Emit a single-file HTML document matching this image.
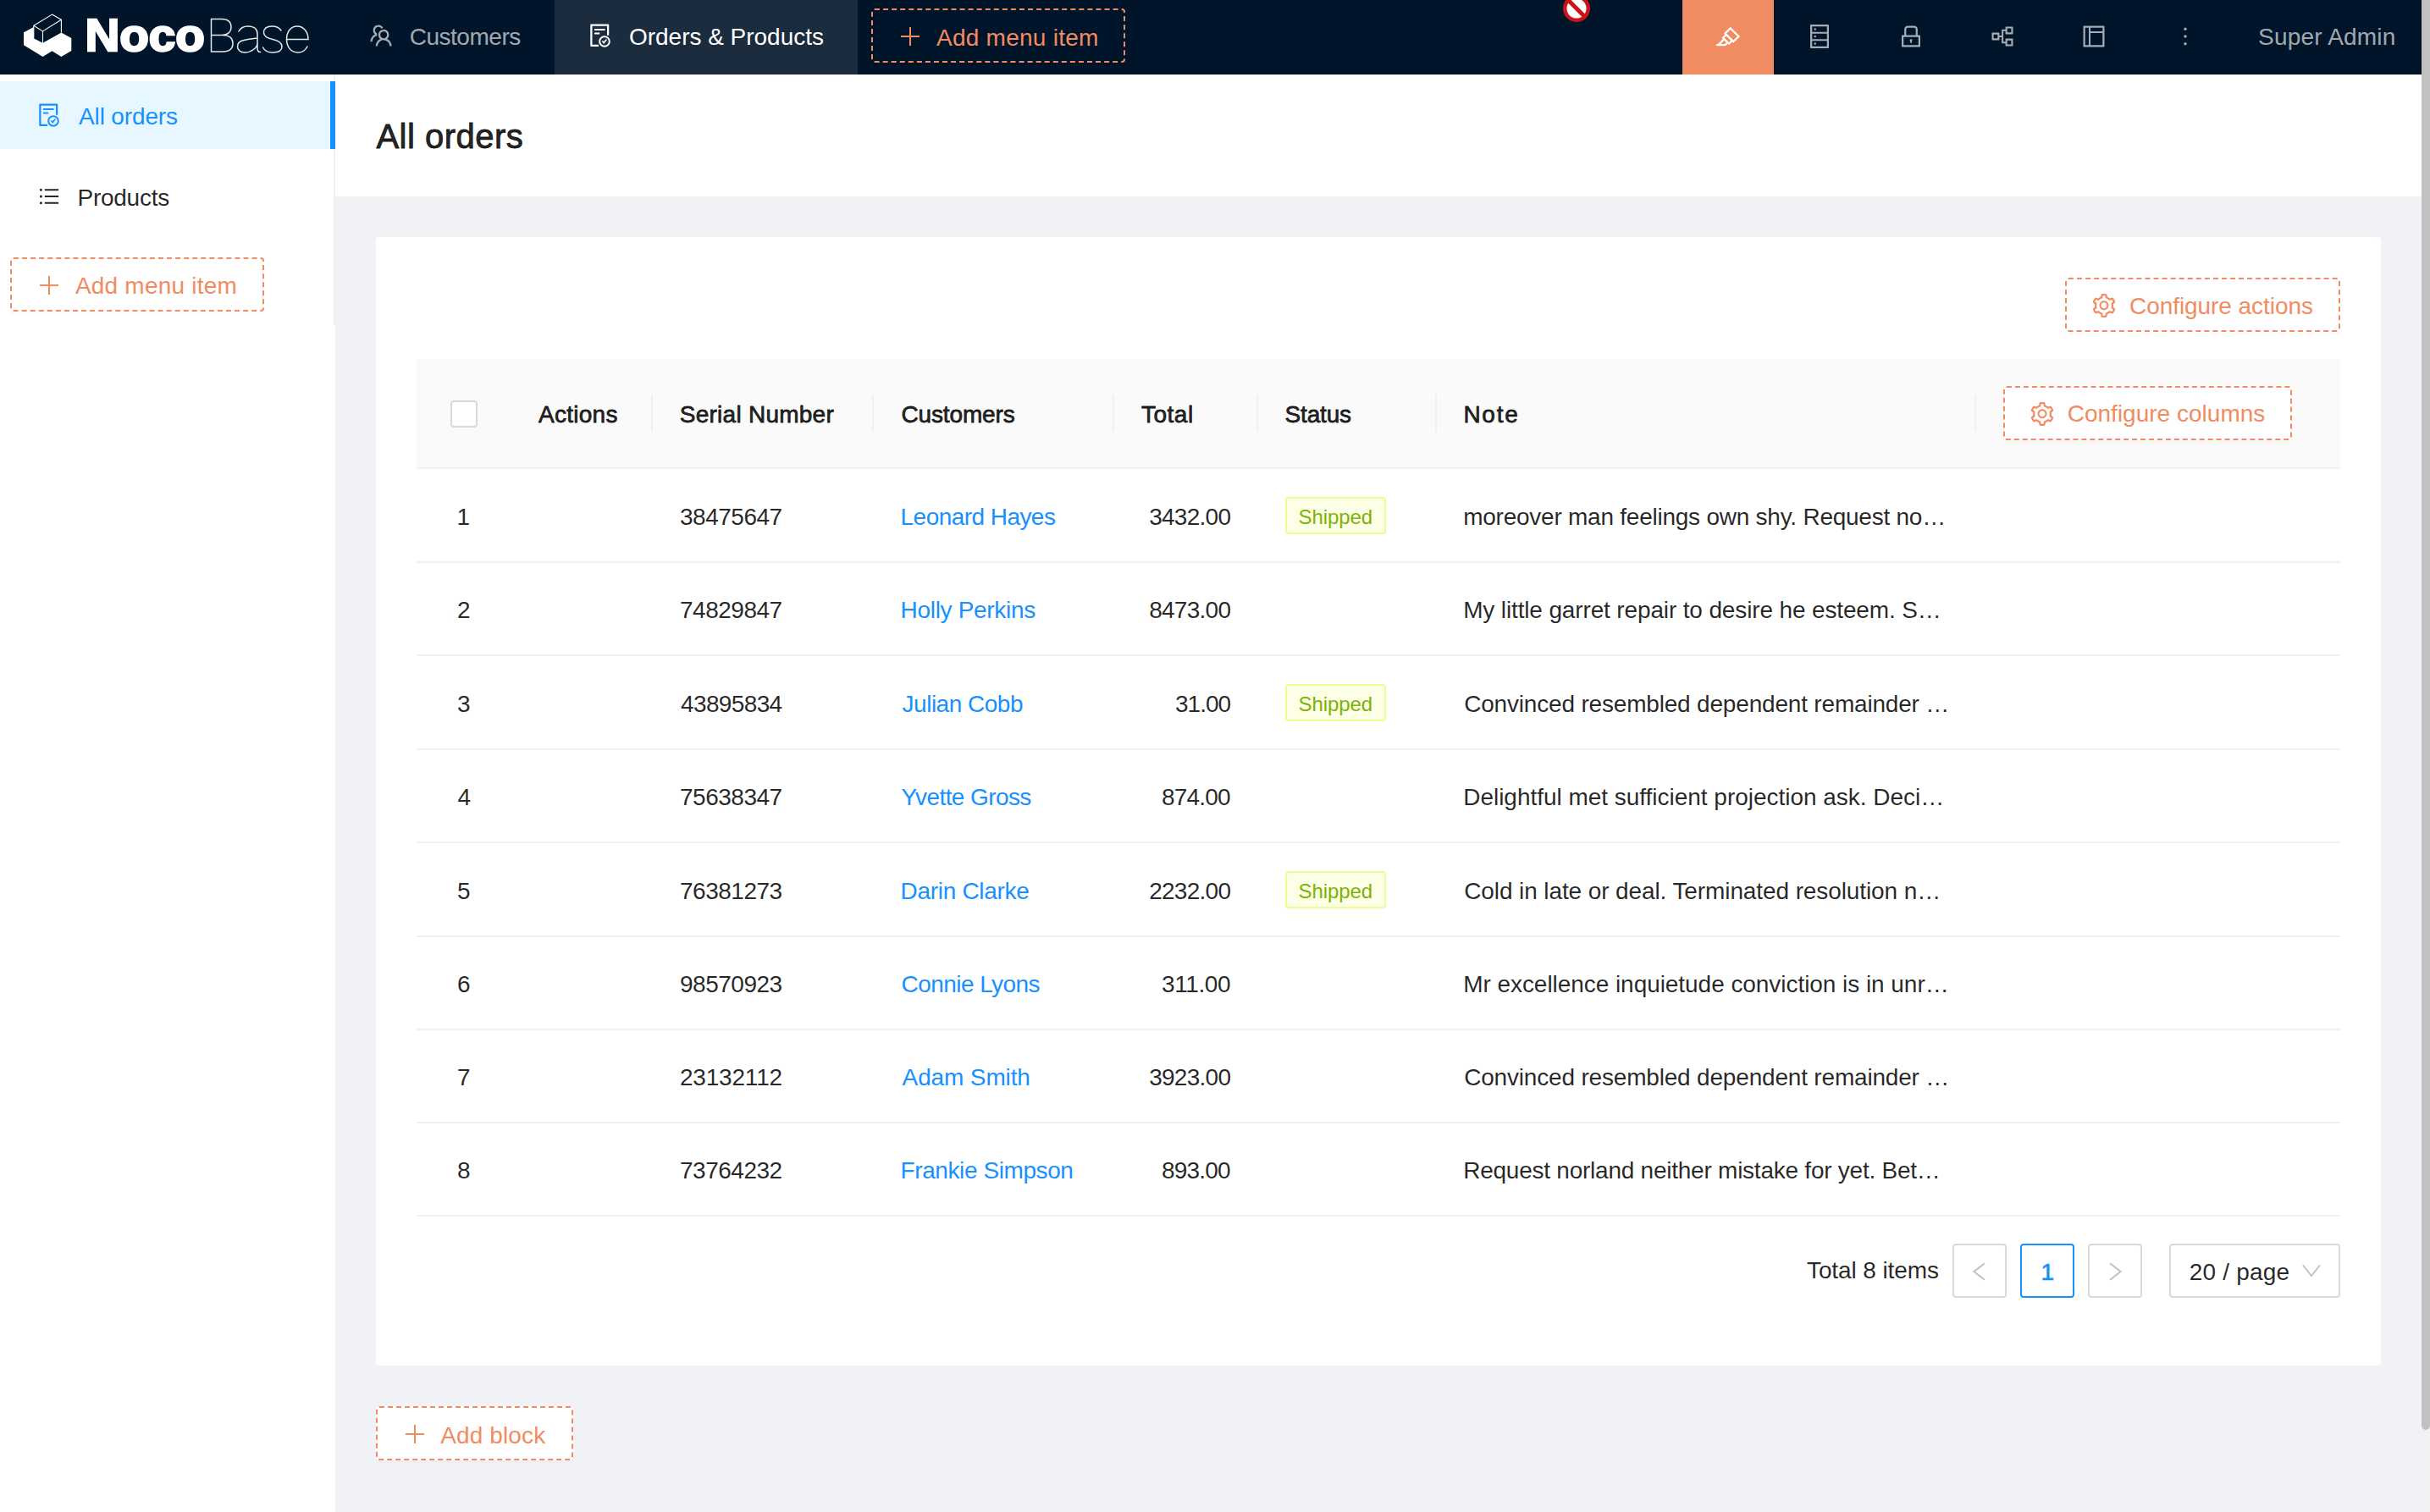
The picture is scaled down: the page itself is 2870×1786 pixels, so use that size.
<!DOCTYPE html>
<html><head><meta charset="utf-8"><title>NocoBase</title>
<style>
html,body{margin:0;padding:0;}
body{width:2870px;height:1786px;overflow:hidden;position:relative;background:#f0f2f5;font-family:"Liberation Sans",sans-serif;}
.a{position:absolute;box-sizing:border-box;}
.t{white-space:nowrap;}
@media (max-width:1600px){body{zoom:0.5;}}
</style></head><body>
<div class="a" style="left:0px;top:88px;width:396px;height:1698px;background:#fff"></div>
<div class="a" style="left:394px;top:88px;width:2px;height:296px;background:#f0f0f0"></div>
<div class="a" style="left:0px;top:96px;width:390px;height:80px;background:#e6f7ff"></div>
<div class="a" style="left:390px;top:96px;width:6px;height:80px;background:#1890ff"></div>
<svg class="a" style="left:42px;top:120px;" width="32" height="32" viewBox="0 0 1024 1024"><path fill="#1890ff" d="M688 312v-48c0-4.4-3.6-8-8-8H296c-4.4 0-8 3.6-8 8v48c0 4.4 3.6 8 8 8h384c4.4 0 8-3.6 8-8zm-392 88c-4.4 0-8 3.6-8 8v48c0 4.4 3.6 8 8 8h184c4.4 0 8-3.6 8-8v-48c0-4.4-3.6-8-8-8H296zm376 116c-119.3 0-216 96.7-216 216s96.7 216 216 216 216-96.7 216-216-96.7-216-216-216zm107.5 323.5C750.8 868.2 712.6 884 672 884s-78.8-15.8-107.5-44.5C535.8 810.8 520 772.6 520 732s15.8-78.8 44.5-107.5C593.2 595.8 631.4 580 672 580s78.8 15.8 107.5 44.5C808.2 653.2 824 691.4 824 732s-15.8 78.8-44.5 107.5zM761 656h-44.3c-2.6 0-5 1.2-6.5 3.3l-63.5 87.8-23.1-31.9a7.920 7.920 0 00-6.5-3.3H573c-6.5 0-10.3 7.4-6.5 12.7l73.8 102.1c3.2 4.4 9.7 4.4 12.9 0l114.2-158c3.9-5.3.1-12.7-6.4-12.7zM440 852H208V148h560v344c0 4.4 3.6 8 8 8h56c4.4 0 8-3.6 8-8V108c0-17.7-14.3-32-32-32H168c-17.7 0-32 14.3-32 32v784c0 17.7 14.3 32 32 32h272c4.4 0 8-3.6 8-8v-56c0-4.4-3.6-8-8-8z"/></svg>
<div class="a t" style="left:93.00px;top:124.00px;font-size:28px;line-height:28px;color:#1890ff;letter-spacing:-0.133px;font-weight:400;">All orders</div>
<svg class="a" style="left:44px;top:218px;" width="28" height="28" viewBox="0 0 1024 1024"><path fill="rgba(0,0,0,0.85)" d="M912 192H328c-4.4 0-8 3.6-8 8v56c0 4.4 3.6 8 8 8h584c4.4 0 8-3.6 8-8v-56c0-4.4-3.6-8-8-8zm0 284H328c-4.4 0-8 3.6-8 8v56c0 4.4 3.6 8 8 8h584c4.4 0 8-3.6 8-8v-56c0-4.4-3.6-8-8-8zm0 284H328c-4.4 0-8 3.6-8 8v56c0 4.4 3.6 8 8 8h584c4.4 0 8-3.6 8-8v-56c0-4.4-3.6-8-8-8zM104 228a56 56 0 10112 0 56 56 0 10-112 0zm0 284a56 56 0 10112 0 56 56 0 10-112 0zm0 284a56 56 0 10112 0 56 56 0 10-112 0z"/></svg>
<div class="a t" style="left:91.50px;top:220.00px;font-size:28px;line-height:28px;color:rgba(0,0,0,0.85);letter-spacing:-0.257px;font-weight:400;">Products</div>
<div class="a" style="left:12px;top:304px;width:300px;height:64px;border:2px dashed #f18b62;border-radius:4px;background:#fff;box-shadow:0 4px 0 rgba(0,0,0,0.015)"></div>
<svg class="a" style="left:47.0px;top:326.0px;" width="22" height="22" viewBox="0 0 22 22"><path d="M11.0 0V22M0 11.0H22" stroke="#f18b62" stroke-width="2" fill="none"/></svg>
<div class="a t" style="left:88.90px;top:323.70px;font-size:28px;line-height:28px;color:#f18b62;letter-spacing:0.217px;font-weight:400;">Add menu item</div>
<div class="a" style="left:396px;top:88px;width:2464px;height:144px;background:#fff"></div>
<div class="a t" style="left:444.40px;top:141.00px;font-size:40px;line-height:40px;color:rgba(0,0,0,0.85);letter-spacing:0.489px;font-weight:400;-webkit-text-stroke:0.9px rgba(0,0,0,0.85);">All orders</div>
<div class="a" style="left:444px;top:280px;width:2368px;height:1333px;background:#fff;border-radius:4px"></div>
<div class="a" style="left:2439px;top:328px;width:325px;height:64px;border:2px dashed #f18b62;border-radius:4px;background:#fff;box-shadow:0 4px 0 rgba(0,0,0,0.015)"></div>
<svg class="a" style="left:2469px;top:344.7px;" width="32" height="32" viewBox="0 0 1024 1024"><path fill="#f18b62" d="M924.8 625.7l-65.5-56c3.1-19 4.7-38.4 4.7-57.8s-1.6-38.8-4.7-57.8l65.5-56a32.03 32.03 0 009.3-35.2l-.9-2.6a443.74 443.74 0 00-79.7-137.9l-1.8-2.1a32.12 32.12 0 00-35.1-9.5l-81.3 28.9c-30-24.6-63.5-44-99.7-57.6l-15.7-85a32.05 32.05 0 00-25.8-25.7l-2.7-.5c-52.1-9.4-106.9-9.4-159 0l-2.7.5a32.05 32.05 0 00-25.8 25.7l-15.8 85.4a351.86 351.86 0 00-99 57.4l-81.9-29.1a32 32 0 00-35.1 9.5l-1.8 2.1a446.02 446.02 0 00-79.7 137.9l-.9 2.6c-4.5 12.5-.8 26.5 9.3 35.2l66.3 56.6c-3.1 18.8-4.6 38-4.6 57.1 0 19.2 1.5 38.4 4.6 57.1L99 625.5a32.03 32.03 0 00-9.3 35.2l.9 2.6c18.1 50.4 44.9 96.9 79.7 137.9l1.8 2.1a32.12 32.12 0 0035.1 9.5l81.9-29.1c29.8 24.5 63.1 43.9 99 57.4l15.8 85.4a32.05 32.05 0 0025.8 25.7l2.7.5a449.4 449.4 0 00159 0l2.7-.5a32.05 32.05 0 0025.8-25.7l15.7-85a350 350 0 0099.7-57.6l81.3 28.9a32 32 0 0035.1-9.5l1.8-2.1c34.8-41.1 61.6-87.5 79.7-137.9l.9-2.6c4.5-12.3.8-26.3-9.3-35zM788.3 465.9c2.5 15.1 3.8 30.6 3.8 46.1s-1.3 31-3.8 46.1l-6.6 40.1 74.7 63.9a370.03 370.03 0 01-42.6 73.6L721 702.8l-31.4 25.8c-23.9 19.6-50.5 35-79.3 45.8l-38.1 14.3-17.9 97a377.5 377.5 0 01-85 0l-17.9-97.2-37.8-14.5c-28.5-10.8-55-26.2-78.7-45.7l-31.4-25.9-93.4 33.2c-17-22.9-31.2-47.6-42.6-73.6l75.5-64.5-6.5-40c-2.4-14.9-3.7-30.3-3.7-45.5 0-15.3 1.2-30.6 3.7-45.5l6.5-40-75.5-64.5c11.3-26.1 25.6-50.7 42.6-73.6l93.4 33.2 31.4-25.9c23.7-19.5 50.2-34.9 78.7-45.7l37.9-14.3 17.9-97.2c28.1-3.2 56.8-3.2 85 0l17.9 97 38.1 14.3c28.7 10.8 55.4 26.2 79.3 45.8l31.4 25.8 92.8-32.9c17 22.9 31.2 47.6 42.6 73.6L781.8 426l6.5 39.9zM512 326c-97.2 0-176 78.8-176 176s78.8 176 176 176 176-78.8 176-176-78.8-176-176-176zm79.2 255.2A111.6 111.6 0 01512 614c-29.9 0-58-11.7-79.2-32.8A111.6 111.6 0 01400 502c0-29.9 11.7-58 32.8-79.2C454 401.6 482.1 390 512 390c29.9 0 58 11.6 79.2 32.8A111.6 111.6 0 01624 502c0 29.9-11.7 58-32.8 79.2z"/></svg>
<div class="a t" style="left:2515.00px;top:347.50px;font-size:28px;line-height:28px;color:#f18b62;letter-spacing:-0.062px;font-weight:400;">Configure actions</div>
<div class="a" style="left:492px;top:424px;width:2272px;height:128px;background:#fafafa;border-radius:4px 4px 0 0"></div>
<div class="a" style="left:492px;top:552px;width:2272px;height:2px;background:#f0f0f0"></div>
<div class="a" style="left:769px;top:466px;width:2px;height:44px;background:#f0f0f0"></div>
<div class="a" style="left:1030px;top:466px;width:2px;height:44px;background:#f0f0f0"></div>
<div class="a" style="left:1314px;top:466px;width:2px;height:44px;background:#f0f0f0"></div>
<div class="a" style="left:1484px;top:466px;width:2px;height:44px;background:#f0f0f0"></div>
<div class="a" style="left:1695px;top:466px;width:2px;height:44px;background:#f0f0f0"></div>
<div class="a" style="left:2332px;top:466px;width:2px;height:44px;background:#f0f0f0"></div>
<div class="a" style="left:532px;top:473px;width:32px;height:32px;border:2px solid #d9d9d9;border-radius:4px;background:#fff"></div>
<div class="a t" style="left:636.00px;top:475.50px;font-size:28px;line-height:28px;color:rgba(0,0,0,0.85);letter-spacing:0.267px;font-weight:400;-webkit-text-stroke:0.8px rgba(0,0,0,0.85);">Actions</div>
<div class="a t" style="left:802.80px;top:475.50px;font-size:28px;line-height:28px;color:rgba(0,0,0,0.85);letter-spacing:0.250px;font-weight:400;-webkit-text-stroke:0.8px rgba(0,0,0,0.85);">Serial Number</div>
<div class="a t" style="left:1064.40px;top:475.50px;font-size:28px;line-height:28px;color:rgba(0,0,0,0.85);letter-spacing:-0.125px;font-weight:400;-webkit-text-stroke:0.8px rgba(0,0,0,0.85);">Customers</div>
<div class="a t" style="left:1348.00px;top:475.50px;font-size:28px;line-height:28px;color:rgba(0,0,0,0.85);letter-spacing:0.500px;font-weight:400;-webkit-text-stroke:0.8px rgba(0,0,0,0.85);">Total</div>
<div class="a t" style="left:1517.50px;top:475.50px;font-size:28px;line-height:28px;color:rgba(0,0,0,0.85);letter-spacing:-0.160px;font-weight:400;-webkit-text-stroke:0.8px rgba(0,0,0,0.85);">Status</div>
<div class="a t" style="left:1728.40px;top:475.50px;font-size:28px;line-height:28px;color:rgba(0,0,0,0.85);letter-spacing:1.733px;font-weight:400;-webkit-text-stroke:0.8px rgba(0,0,0,0.85);">Note</div>
<div class="a" style="left:2366px;top:456px;width:341px;height:64px;border:2px dashed #f18b62;border-radius:4px;background:#fff;box-shadow:0 4px 0 rgba(0,0,0,0.015)"></div>
<svg class="a" style="left:2395.6px;top:472.9px;" width="32" height="32" viewBox="0 0 1024 1024"><path fill="#f18b62" d="M924.8 625.7l-65.5-56c3.1-19 4.7-38.4 4.7-57.8s-1.6-38.8-4.7-57.8l65.5-56a32.03 32.03 0 009.3-35.2l-.9-2.6a443.74 443.74 0 00-79.7-137.9l-1.8-2.1a32.12 32.12 0 00-35.1-9.5l-81.3 28.9c-30-24.6-63.5-44-99.7-57.6l-15.7-85a32.05 32.05 0 00-25.8-25.7l-2.7-.5c-52.1-9.4-106.9-9.4-159 0l-2.7.5a32.05 32.05 0 00-25.8 25.7l-15.8 85.4a351.86 351.86 0 00-99 57.4l-81.9-29.1a32 32 0 00-35.1 9.5l-1.8 2.1a446.02 446.02 0 00-79.7 137.9l-.9 2.6c-4.5 12.5-.8 26.5 9.3 35.2l66.3 56.6c-3.1 18.8-4.6 38-4.6 57.1 0 19.2 1.5 38.4 4.6 57.1L99 625.5a32.03 32.03 0 00-9.3 35.2l.9 2.6c18.1 50.4 44.9 96.9 79.7 137.9l1.8 2.1a32.12 32.12 0 0035.1 9.5l81.9-29.1c29.8 24.5 63.1 43.9 99 57.4l15.8 85.4a32.05 32.05 0 0025.8 25.7l2.7.5a449.4 449.4 0 00159 0l2.7-.5a32.05 32.05 0 0025.8-25.7l15.7-85a350 350 0 0099.7-57.6l81.3 28.9a32 32 0 0035.1-9.5l1.8-2.1c34.8-41.1 61.6-87.5 79.7-137.9l.9-2.6c4.5-12.3.8-26.3-9.3-35zM788.3 465.9c2.5 15.1 3.8 30.6 3.8 46.1s-1.3 31-3.8 46.1l-6.6 40.1 74.7 63.9a370.03 370.03 0 01-42.6 73.6L721 702.8l-31.4 25.8c-23.9 19.6-50.5 35-79.3 45.8l-38.1 14.3-17.9 97a377.5 377.5 0 01-85 0l-17.9-97.2-37.8-14.5c-28.5-10.8-55-26.2-78.7-45.7l-31.4-25.9-93.4 33.2c-17-22.9-31.2-47.6-42.6-73.6l75.5-64.5-6.5-40c-2.4-14.9-3.7-30.3-3.7-45.5 0-15.3 1.2-30.6 3.7-45.5l6.5-40-75.5-64.5c11.3-26.1 25.6-50.7 42.6-73.6l93.4 33.2 31.4-25.9c23.7-19.5 50.2-34.9 78.7-45.7l37.9-14.3 17.9-97.2c28.1-3.2 56.8-3.2 85 0l17.9 97 38.1 14.3c28.7 10.8 55.4 26.2 79.3 45.8l31.4 25.8 92.8-32.9c17 22.9 31.2 47.6 42.6 73.6L781.8 426l6.5 39.9zM512 326c-97.2 0-176 78.8-176 176s78.8 176 176 176 176-78.8 176-176-78.8-176-176-176zm79.2 255.2A111.6 111.6 0 01512 614c-29.9 0-58-11.7-79.2-32.8A111.6 111.6 0 01400 502c0-29.9 11.7-58 32.8-79.2C454 401.6 482.1 390 512 390c29.9 0 58 11.6 79.2 32.8A111.6 111.6 0 01624 502c0 29.9-11.7 58-32.8 79.2z"/></svg>
<div class="a t" style="left:2441.70px;top:475.00px;font-size:28px;line-height:28px;color:#f18b62;letter-spacing:0.012px;font-weight:400;">Configure columns</div>
<div class="a t" style="left:539.50px;top:596.50px;font-size:28px;line-height:28px;color:rgba(0,0,0,0.85);letter-spacing:0.000px;font-weight:400;">1</div>
<div class="a t" style="left:803.00px;top:596.50px;font-size:28px;line-height:28px;color:rgba(0,0,0,0.85);letter-spacing:-0.486px;font-weight:400;">38475647</div>
<div class="a t" style="left:1063.60px;top:596.50px;font-size:28px;line-height:28px;color:#1890ff;letter-spacing:-0.550px;font-weight:400;">Leonard Hayes</div>
<div class="a t" style="left:1357.20px;top:596.50px;font-size:28px;line-height:28px;color:rgba(0,0,0,0.85);letter-spacing:-0.733px;font-weight:400;">3432.00</div>
<div class="a" style="left:1518px;top:587px;width:119px;height:44px;background:#fcffe6;border:2px solid #eaff8f;border-radius:4px"></div>
<div class="a t" style="left:1533.50px;top:599.00px;font-size:24px;line-height:24px;color:#7cb305;letter-spacing:-0.067px;font-weight:400;">Shipped</div>
<div class="a t" style="left:1728.20px;top:596.50px;font-size:28px;line-height:28px;color:rgba(0,0,0,0.85);letter-spacing:-0.244px;font-weight:400;">moreover man feelings own shy. Request no…</div>
<div class="a" style="left:492px;top:663px;width:2272px;height:2px;background:#f0f0f0"></div>
<div class="a t" style="left:540.00px;top:707.00px;font-size:28px;line-height:28px;color:rgba(0,0,0,0.85);letter-spacing:0.000px;font-weight:400;">2</div>
<div class="a t" style="left:803.00px;top:707.00px;font-size:28px;line-height:28px;color:rgba(0,0,0,0.85);letter-spacing:-0.486px;font-weight:400;">74829847</div>
<div class="a t" style="left:1063.60px;top:707.00px;font-size:28px;line-height:28px;color:#1890ff;letter-spacing:-0.317px;font-weight:400;">Holly Perkins</div>
<div class="a t" style="left:1357.20px;top:707.00px;font-size:28px;line-height:28px;color:rgba(0,0,0,0.85);letter-spacing:-0.733px;font-weight:400;">8473.00</div>
<div class="a t" style="left:1728.20px;top:707.00px;font-size:28px;line-height:28px;color:rgba(0,0,0,0.85);letter-spacing:-0.143px;font-weight:400;">My little garret repair to desire he esteem. S…</div>
<div class="a" style="left:492px;top:773px;width:2272px;height:2px;background:#f0f0f0"></div>
<div class="a t" style="left:540.00px;top:817.50px;font-size:28px;line-height:28px;color:rgba(0,0,0,0.85);letter-spacing:0.000px;font-weight:400;">3</div>
<div class="a t" style="left:804.00px;top:817.50px;font-size:28px;line-height:28px;color:rgba(0,0,0,0.85);letter-spacing:-0.629px;font-weight:400;">43895834</div>
<div class="a t" style="left:1065.60px;top:817.50px;font-size:28px;line-height:28px;color:#1890ff;letter-spacing:-0.500px;font-weight:400;">Julian Cobb</div>
<div class="a t" style="left:1388.00px;top:817.50px;font-size:28px;line-height:28px;color:rgba(0,0,0,0.85);letter-spacing:-1.000px;font-weight:400;">31.00</div>
<div class="a" style="left:1518px;top:808px;width:119px;height:44px;background:#fcffe6;border:2px solid #eaff8f;border-radius:4px"></div>
<div class="a t" style="left:1533.50px;top:820.00px;font-size:24px;line-height:24px;color:#7cb305;letter-spacing:-0.067px;font-weight:400;">Shipped</div>
<div class="a t" style="left:1729.20px;top:817.50px;font-size:28px;line-height:28px;color:rgba(0,0,0,0.85);letter-spacing:-0.185px;font-weight:400;">Convinced resembled dependent remainder …</div>
<div class="a" style="left:492px;top:884px;width:2272px;height:2px;background:#f0f0f0"></div>
<div class="a t" style="left:540.50px;top:928.00px;font-size:28px;line-height:28px;color:rgba(0,0,0,0.85);letter-spacing:0.000px;font-weight:400;">4</div>
<div class="a t" style="left:803.00px;top:928.00px;font-size:28px;line-height:28px;color:rgba(0,0,0,0.85);letter-spacing:-0.486px;font-weight:400;">75638347</div>
<div class="a t" style="left:1064.60px;top:928.00px;font-size:28px;line-height:28px;color:#1890ff;letter-spacing:-0.600px;font-weight:400;">Yvette Gross</div>
<div class="a t" style="left:1372.00px;top:928.00px;font-size:28px;line-height:28px;color:rgba(0,0,0,0.85);letter-spacing:-0.800px;font-weight:400;">874.00</div>
<div class="a t" style="left:1728.20px;top:928.00px;font-size:28px;line-height:28px;color:rgba(0,0,0,0.85);letter-spacing:-0.022px;font-weight:400;">Delightful met sufficient projection ask. Deci…</div>
<div class="a" style="left:492px;top:994px;width:2272px;height:2px;background:#f0f0f0"></div>
<div class="a t" style="left:540.00px;top:1038.50px;font-size:28px;line-height:28px;color:rgba(0,0,0,0.85);letter-spacing:0.000px;font-weight:400;">5</div>
<div class="a t" style="left:803.00px;top:1038.50px;font-size:28px;line-height:28px;color:rgba(0,0,0,0.85);letter-spacing:-0.486px;font-weight:400;">76381273</div>
<div class="a t" style="left:1063.60px;top:1038.50px;font-size:28px;line-height:28px;color:#1890ff;letter-spacing:-0.309px;font-weight:400;">Darin Clarke</div>
<div class="a t" style="left:1357.20px;top:1038.50px;font-size:28px;line-height:28px;color:rgba(0,0,0,0.85);letter-spacing:-0.733px;font-weight:400;">2232.00</div>
<div class="a" style="left:1518px;top:1029px;width:119px;height:44px;background:#fcffe6;border:2px solid #eaff8f;border-radius:4px"></div>
<div class="a t" style="left:1533.50px;top:1041.00px;font-size:24px;line-height:24px;color:#7cb305;letter-spacing:-0.067px;font-weight:400;">Shipped</div>
<div class="a t" style="left:1729.20px;top:1038.50px;font-size:28px;line-height:28px;color:rgba(0,0,0,0.85);letter-spacing:-0.102px;font-weight:400;">Cold in late or deal. Terminated resolution n…</div>
<div class="a" style="left:492px;top:1105px;width:2272px;height:2px;background:#f0f0f0"></div>
<div class="a t" style="left:540.00px;top:1149.00px;font-size:28px;line-height:28px;color:rgba(0,0,0,0.85);letter-spacing:0.000px;font-weight:400;">6</div>
<div class="a t" style="left:803.00px;top:1149.00px;font-size:28px;line-height:28px;color:rgba(0,0,0,0.85);letter-spacing:-0.486px;font-weight:400;">98570923</div>
<div class="a t" style="left:1064.60px;top:1149.00px;font-size:28px;line-height:28px;color:#1890ff;letter-spacing:-0.564px;font-weight:400;">Connie Lyons</div>
<div class="a t" style="left:1372.00px;top:1149.00px;font-size:28px;line-height:28px;color:rgba(0,0,0,0.85);letter-spacing:-0.400px;font-weight:400;">311.00</div>
<div class="a t" style="left:1728.20px;top:1149.00px;font-size:28px;line-height:28px;color:rgba(0,0,0,0.85);letter-spacing:-0.053px;font-weight:400;">Mr excellence inquietude conviction is in unr…</div>
<div class="a" style="left:492px;top:1215px;width:2272px;height:2px;background:#f0f0f0"></div>
<div class="a t" style="left:540.00px;top:1259.00px;font-size:28px;line-height:28px;color:rgba(0,0,0,0.85);letter-spacing:0.000px;font-weight:400;">7</div>
<div class="a t" style="left:803.00px;top:1259.00px;font-size:28px;line-height:28px;color:rgba(0,0,0,0.85);letter-spacing:-0.200px;font-weight:400;">23132112</div>
<div class="a t" style="left:1065.60px;top:1259.00px;font-size:28px;line-height:28px;color:#1890ff;letter-spacing:-0.133px;font-weight:400;">Adam Smith</div>
<div class="a t" style="left:1357.20px;top:1259.00px;font-size:28px;line-height:28px;color:rgba(0,0,0,0.85);letter-spacing:-0.733px;font-weight:400;">3923.00</div>
<div class="a t" style="left:1729.20px;top:1259.00px;font-size:28px;line-height:28px;color:rgba(0,0,0,0.85);letter-spacing:-0.185px;font-weight:400;">Convinced resembled dependent remainder …</div>
<div class="a" style="left:492px;top:1325px;width:2272px;height:2px;background:#f0f0f0"></div>
<div class="a t" style="left:540.00px;top:1369.00px;font-size:28px;line-height:28px;color:rgba(0,0,0,0.85);letter-spacing:0.000px;font-weight:400;">8</div>
<div class="a t" style="left:803.00px;top:1369.00px;font-size:28px;line-height:28px;color:rgba(0,0,0,0.85);letter-spacing:-0.486px;font-weight:400;">73764232</div>
<div class="a t" style="left:1063.60px;top:1369.00px;font-size:28px;line-height:28px;color:#1890ff;letter-spacing:-0.414px;font-weight:400;">Frankie Simpson</div>
<div class="a t" style="left:1372.00px;top:1369.00px;font-size:28px;line-height:28px;color:rgba(0,0,0,0.85);letter-spacing:-0.800px;font-weight:400;">893.00</div>
<div class="a t" style="left:1728.20px;top:1369.00px;font-size:28px;line-height:28px;color:rgba(0,0,0,0.85);letter-spacing:-0.241px;font-weight:400;">Request norland neither mistake for yet. Bet…</div>
<div class="a" style="left:492px;top:1435px;width:2272px;height:2px;background:#f0f0f0"></div>
<div class="a t" style="left:2134.00px;top:1487.40px;font-size:28px;line-height:28px;color:rgba(0,0,0,0.85);letter-spacing:-0.100px;font-weight:400;">Total 8 items</div>
<div class="a" style="left:2306px;top:1469px;width:64px;height:64px;border:2px solid #d9d9d9;border-radius:4px;background:#fff"></div>
<svg class="a" style="left:2329px;top:1490px;" width="18" height="24" viewBox="0 0 18 24"><path d="M15 2.2L2.4 12 15 21.8" stroke="rgba(0,0,0,0.25)" stroke-width="2" fill="none"/></svg>
<div class="a" style="left:2386px;top:1469px;width:64px;height:64px;border:2px solid #1890ff;border-radius:4px;background:#fff"></div>
<div class="a t" style="left:2410.60px;top:1489.00px;font-size:28px;line-height:28px;color:#1890ff;letter-spacing:0.000px;font-weight:400;-webkit-text-stroke:0.7px #1890ff;">1</div>
<div class="a" style="left:2466px;top:1469px;width:64px;height:64px;border:2px solid #d9d9d9;border-radius:4px;background:#fff"></div>
<svg class="a" style="left:2490px;top:1490px;" width="18" height="24" viewBox="0 0 18 24"><path d="M2 2.2L14.6 12 2 21.8" stroke="rgba(0,0,0,0.25)" stroke-width="2" fill="none"/></svg>
<div class="a" style="left:2562px;top:1469px;width:202px;height:64px;border:2px solid #d9d9d9;border-radius:4px;background:#fff"></div>
<div class="a t" style="left:2585.70px;top:1489.00px;font-size:28px;line-height:28px;color:rgba(0,0,0,0.85);letter-spacing:0.200px;font-weight:400;">20 / page</div>
<svg class="a" style="left:2718px;top:1492px;" width="24" height="18" viewBox="0 0 24 18"><path d="M2 2.5L12 15 22 2.5" stroke="rgba(0,0,0,0.25)" stroke-width="1.9" fill="none"/></svg>
<div class="a" style="left:444px;top:1661px;width:233px;height:64px;border:2px dashed #f18b62;border-radius:4px;background:#fff;box-shadow:0 4px 0 rgba(0,0,0,0.015)"></div>
<svg class="a" style="left:479.0px;top:1683.0px;" width="22" height="22" viewBox="0 0 22 22"><path d="M11.0 0V22M0 11.0H22" stroke="#f18b62" stroke-width="2" fill="none"/></svg>
<div class="a t" style="left:520.20px;top:1681.50px;font-size:28px;line-height:28px;color:#f18b62;letter-spacing:0.125px;font-weight:400;">Add block</div>
<div class="a" style="left:0px;top:0px;width:2860px;height:88px;background:#001529"></div>
<svg class="a" style="left:0px;top:0px;" width="396" height="88" viewBox="0 0 396 88">
<polygon fill="#fff" points="28,38.2 39.8,32 39.8,45.3 50.5,50.8 72.4,38.6 84.3,45 84.3,59.9 72.4,67 61.5,60.3 50.5,67 28,53.2"/>
<g fill="none" stroke="#fff" stroke-width="1.1" stroke-linejoin="round">
<polygon points="39.8,30.2 61.5,17.1 72.4,23.3 50.5,36.9"/>
<path d="M39.8 30.2V45.3M50.5 36.9V50.8M72.4 23.3V38.6"/>
</g>
<text x="100.4" y="59.8" font-family="Liberation Sans" font-weight="700" font-size="53" fill="#fff" stroke="#fff" stroke-width="2.4" textLength="141.5" lengthAdjust="spacingAndGlyphs">Noco</text>
<g fill="none" stroke="#e8e8e8" stroke-width="1.5" stroke-linecap="round">
<path d="M249.5 22.5V61H263C271 61 275 57 275 51C275 45.5 271 41.4 263 41.4H249.5M249.5 22.5H262C269.5 22.5 273 26.5 273 31.8C273 37.2 269.5 41.4 262 41.4"/>
<path d="M282 37C284 33 288 31 293 31C300 31 304 34.5 304 40V57C304 60 305.5 61.5 307.5 61.5M304 45C297 46 290 46.5 286 48C282 49.5 280.5 52 280.5 55C280.5 59 284 62 289 62C296 62 304 57 304 51"/>
<path d="M332 36C330 33 326 31 321.5 31C315 31 311.5 34 311.5 38.5C311.5 43 315 45 322 46.5C329 48 333 50 333 55C333 59.5 329 62 322 62C316 62 312 59 310.5 56"/>
<path d="M338.5 46.5H364C364 37 358 31 351 31C343 31 338.5 38 338.5 46.5C338.5 55.5 344 62 351.5 62C357 62 361 59 363 55"/>
</g></svg>
<div class="a" style="left:655px;top:0px;width:358px;height:88px;background:#1a2c3e"></div>
<svg class="a" style="left:434px;top:26px;" width="32" height="32" viewBox="0 0 1024 1024"><path fill="rgba(255,255,255,0.65)" d="M824.2 699.9a301.55 301.55 0 00-86.4-60.4C783.1 602.8 812 546.8 812 484c0-110.8-92.4-201.7-203.2-200-109.1 1.7-197 90.6-197 200 0 62.8 29 118.8 74.2 155.5a300.95 300.95 0 00-86.4 60.4C345 754.6 314 826.8 312 903.8a8 8 0 008 8.2h56c4.3 0 7.9-3.4 8-7.7 1.9-58 25.4-112.3 66.7-153.5A226.62 226.62 0 01612 684c60.9 0 118.2 23.7 161.3 66.8C814.5 792 838 846.3 840 904.3c.1 4.3 3.7 7.7 8 7.7h56a8 8 0 008-8.2c-2-77-33-149.2-87.8-203.9zM612 612c-34.2 0-66.4-13.3-90.5-37.5a126.86 126.86 0 01-37.5-91.8c.3-32.8 13.4-64.5 36.3-88 24-24.6 56.1-38.3 90.4-38.7 33.9-.3 66.8 12.9 91 36.6 24.8 24.3 38.4 56.8 38.4 91.4 0 34.2-13.3 66.3-37.5 90.5A127.3 127.3 0 01612 612zM361.5 510.4c-.9-8.7-1.4-17.5-1.4-26.4 0-15.9 1.5-31.4 4.3-46.5.7-3.6-1.2-7.3-4.5-8.8-13.6-6.1-26.1-14.5-36.9-25.1a127.54 127.54 0 01-38.7-95.4c.9-32.1 13.8-62.6 36.3-85.6 24.7-25.3 57.9-39.1 93.2-38.7 31.9.3 62.7 12.6 86 34.4 7.9 7.4 14.7 15.600 20.4 24.4 2 3.1 5.9 4.4 9.3 3.2 17.6-6.1 36.2-10.4 55.3-12.4 5.6-.6 8.8-6.6 6.3-11.6-32.5-64.3-98.9-108.7-175.7-109.9-110.9-1.7-203.3 89.2-203.3 199.9 0 62.8 28.9 118.8 74.2 155.5-31.8 14.7-61.1 35-86.5 60.4-54.8 54.7-85.8 126.9-87.8 204a8 8 0 008 8.2h56.1c4.3 0 7.9-3.4 8-7.7 1.9-58 25.4-112.3 66.7-153.5 29.4-29.4 65.4-49.8 104.7-59.7 3.9-1 6.5-4.8 6-8.8z"/></svg>
<div class="a t" style="left:483.70px;top:29.60px;font-size:28px;line-height:28px;color:rgba(255,255,255,0.65);letter-spacing:-0.475px;font-weight:400;">Customers</div>
<svg class="a" style="left:693px;top:26px;" width="32" height="32" viewBox="0 0 1024 1024"><path fill="#fff" d="M688 312v-48c0-4.4-3.6-8-8-8H296c-4.4 0-8 3.6-8 8v48c0 4.4 3.6 8 8 8h384c4.4 0 8-3.6 8-8zm-392 88c-4.4 0-8 3.6-8 8v48c0 4.4 3.6 8 8 8h184c4.4 0 8-3.6 8-8v-48c0-4.4-3.6-8-8-8H296zm376 116c-119.3 0-216 96.7-216 216s96.7 216 216 216 216-96.7 216-216-96.7-216-216-216zm107.5 323.5C750.8 868.2 712.6 884 672 884s-78.8-15.8-107.5-44.5C535.8 810.8 520 772.6 520 732s15.8-78.8 44.5-107.5C593.2 595.8 631.4 580 672 580s78.8 15.8 107.5 44.5C808.2 653.2 824 691.4 824 732s-15.8 78.8-44.5 107.5zM761 656h-44.3c-2.6 0-5 1.2-6.5 3.3l-63.5 87.8-23.1-31.9a7.920 7.920 0 00-6.5-3.3H573c-6.5 0-10.3 7.4-6.5 12.7l73.8 102.1c3.2 4.4 9.7 4.4 12.9 0l114.2-158c3.9-5.3.1-12.7-6.4-12.7zM440 852H208V148h560v344c0 4.4 3.6 8 8 8h56c4.4 0 8-3.6 8-8V108c0-17.7-14.3-32-32-32H168c-17.7 0-32 14.3-32 32v784c0 17.7 14.3 32 32 32h272c4.4 0 8-3.6 8-8v-56c0-4.4-3.6-8-8-8z"/></svg>
<div class="a t" style="left:743.00px;top:29.60px;font-size:28px;line-height:28px;color:#fff;letter-spacing:-0.025px;font-weight:400;">Orders &amp; Products</div>
<div class="a" style="left:1029px;top:10px;width:300px;height:64px;border:2px dashed #f18b62;border-radius:4px"></div>
<svg class="a" style="left:1064.0px;top:32.0px;" width="22" height="22" viewBox="0 0 22 22"><path d="M11.0 0V22M0 11.0H22" stroke="#f18b62" stroke-width="2" fill="none"/></svg>
<div class="a t" style="left:1106.00px;top:30.50px;font-size:28px;line-height:28px;color:#f18b62;letter-spacing:0.250px;font-weight:400;">Add menu item</div>
<div class="a" style="left:1987px;top:0px;width:108px;height:88px;background:#f18b62"></div>
<svg class="a" style="left:2025px;top:27px;" width="32" height="32" viewBox="0 0 1024 1024"><path fill="#fff" d="M957.6 507.4L603.2 158.2a7.9 7.9 0 00-11.2 0L353.3 393.4a8.03 8.03 0 00-.1 11.3l.1.1 40 39.4-117.2 115.3a8.03 8.03 0 00-.1 11.3l.1.1 39.5 38.9-189.1 187H72.1c-4.4 0-8.1 3.6-8.1 8V860c0 4.4 3.6 8 8 8h344.9c2.1 0 4.1-.8 5.6-2.3l76.1-75.6 40.4 39.8a7.9 7.9 0 0011.2 0l117.1-115.6 40.1 39.5a7.9 7.9 0 0011.2 0l238.7-235.2c3.4-3 3.4-8 .3-11.2zM389.8 796.2H229.6l134.4-133 80.1 78.9-54.3 54.1zm154.8-62.1L373.2 565.2l68.6-67.6 171.4 168.9-68.6 67.6zM713.1 658L450.3 399.1 597.6 254l262.8 259-147.3 145z"/></svg>
<svg class="a" style="left:2133px;top:27px;" width="32" height="32" viewBox="0 0 1024 1024"><path fill="rgba(255,255,255,0.65)" d="M832 64H192c-17.7 0-32 14.3-32 32v832c0 17.7 14.3 32 32 32h640c17.7 0 32-14.3 32-32V96c0-17.7-14.3-32-32-32zm-600 72h560v208H232V136zm560 480H232V408h560v208zm0 272H232V680h560v208zM304 240a40 40 0 1080 0 40 40 0 10-80 0zm0 272a40 40 0 1080 0 40 40 0 10-80 0zm0 272a40 40 0 1080 0 40 40 0 10-80 0z"/></svg>
<svg class="a" style="left:2241px;top:27px;" width="32" height="32" viewBox="0 0 1024 1024"><path fill="rgba(255,255,255,0.65)" d="M832 464h-68V240c0-70.7-57.3-128-128-128H388c-70.7 0-128 57.3-128 128v224h-68c-17.7 0-32 14.3-32 32v384c0 17.7 14.3 32 32 32h640c17.7 0 32-14.3 32-32V496c0-17.7-14.3-32-32-32zM332 240c0-30.9 25.1-56 56-56h248c30.9 0 56 25.1 56 56v224H332V240zm460 600H232V536h560v304zM484 701v53c0 4.4 3.6 8 8 8h40c4.4 0 8-3.6 8-8v-53a48.01 48.01 0 10-56 0z"/></svg>
<svg class="a" style="left:2349px;top:27px;" width="32" height="32" viewBox="0 0 1024 1024"><path fill="rgba(255,255,255,0.65)" d="M640.6 429.8h257.1c7.9 0 14.3-6.4 14.3-14.3V158.3c0-7.9-6.4-14.3-14.3-14.3H640.6c-7.9 0-14.3 6.4-14.3 14.3v92.9H490.6c-3.9 0-7.1 3.2-7.1 7.1v221.5h-85.7v-96.5c0-7.9-6.4-14.3-14.3-14.3H126.3c-7.9 0-14.3 6.4-14.3 14.3v257.2c0 7.9 6.4 14.3 14.3 14.3h257.1c7.9 0 14.3-6.4 14.3-14.3V544h85.7v221.5c0 3.9 3.2 7.1 7.1 7.1h135.7v92.9c0 7.9 6.4 14.3 14.3 14.3h257.1c7.9 0 14.3-6.4 14.3-14.3v-257c0-7.900-6.4-14.300-14.3-14.3h-257c-7.9 0-14.3 6.4-14.3 14.3v100h-78.6v-393h78.6v100c0 7.9 6.4 14.3 14.3 14.3zm53.5-217.9h150V362h-150V211.9zM329.9 587h-150V437h150v150zm364.2 75.1h150v150.1h-150V662.1z"/></svg>
<svg class="a" style="left:2457px;top:27px;" width="32" height="32" viewBox="0 0 1024 1024"><path fill="rgba(255,255,255,0.65)" d="M880 112H144c-17.7 0-32 14.3-32 32v736c0 17.7 14.3 32 32 32h736c17.7 0 32-14.3 32-32V144c0-17.7-14.3-32-32-32zm-696 72h136v656H184V184zm656 656H384V384h456v456zM384 320V184h456v136H384z"/></svg>
<svg class="a" style="left:2565px;top:27px;" width="32" height="32" viewBox="0 0 1024 1024"><path fill="rgba(255,255,255,0.65)" d="M456 231a56 56 0 10112 0 56 56 0 10-112 0zm0 280a56 56 0 10112 0 56 56 0 10-112 0zm0 280a56 56 0 10112 0 56 56 0 10-112 0z"/></svg>
<div class="a t" style="left:2667.00px;top:29.80px;font-size:28px;line-height:28px;color:rgba(255,255,255,0.65);letter-spacing:0.200px;font-weight:400;">Super Admin</div>
<svg class="a" style="left:1844px;top:-8px;" width="36" height="36" viewBox="0 0 36 36"><circle cx="18" cy="18" r="13.8" fill="#fff" stroke="#c8141a" stroke-width="4.5"/><path d="M8.5 8.5L27.5 27.5" stroke="#c8141a" stroke-width="5"/></svg>
<div class="a" style="left:2860px;top:0px;width:10px;height:1786px;background:#f1f1f1"></div>
<div class="a" style="left:2860px;top:0px;width:10px;height:1689px;background:#c1c1c1;border-radius:0 0 5px 5px"></div>
</body></html>
